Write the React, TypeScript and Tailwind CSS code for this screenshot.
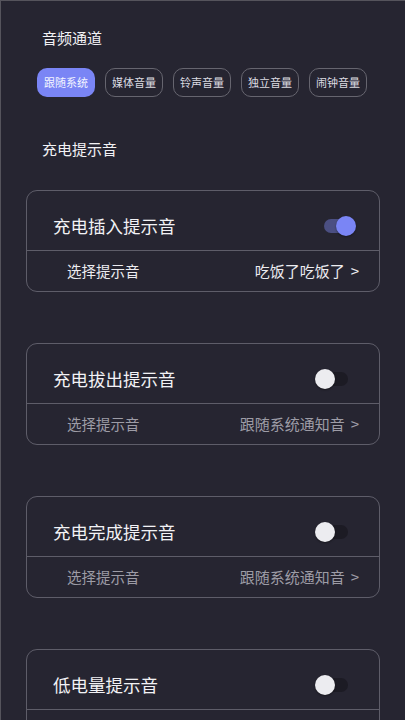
import React from "react";

const font = { fontFamily: '"Noto Sans CJK SC", "Noto Sans", sans-serif' };

function Toggle({ on }: { on: boolean }) {
  return (
    <div
      className={`relative w-[24px] h-[14px] rounded-full ${
        on ? "bg-[#4b4f82]" : "bg-[#1c1b24]"
      }`}
    >
      <div
        className={`absolute top-[-3px] w-[20px] h-[20px] rounded-full shadow-[0_1px_2px_rgba(0,0,0,0.4)] ${
          on ? "right-[-8px] bg-[#7a85f5]" : "left-[-9px] bg-[#ececf0]"
        }`}
      />
    </div>
  );
}

function Card({
  title,
  on,
  value,
}: {
  title: string;
  on: boolean;
  value: string;
}) {
  const sub = on ? "text-[#ececf0]" : "text-[#9d9ca6]";
  return (
    <div className="rounded-[11px] border border-[#5e5d69] overflow-hidden">
      <div className="h-[59px] pt-[10px] flex items-center justify-between pl-[26px] pr-[31px]">
        <span className="text-[17.5px] leading-[24px] text-[#f2f2f5]">{title}</span>
        <Toggle on={on} />
      </div>
      <div className="h-px bg-[#5e5d69]" />
      <div className="h-[40px] flex items-center justify-between pl-[40px] pr-[20px]">
        <span className={`text-[14.5px] ${sub}`}>选择提示音</span>
        <span className={`text-[15px] ${sub}`}>
          {value}
          <span className="ml-[6px]">&gt;</span>
        </span>
      </div>
    </div>
  );
}

export default function App() {
  const chips = ["跟随系统", "媒体音量", "铃声音量", "独立音量", "闹钟音量"];
  return (
    <div
      className="min-h-[720px] h-[720px] overflow-hidden bg-[#262531] border-l border-t border-[#55545c]"
      style={font}
    >
      <div className="pl-[41px] pt-[27px] text-[15px] leading-[20px] text-[#f2f2f5]">
        音频通道
      </div>
      <div className="flex gap-[10px] pl-[36px] mt-[20px]">
        {chips.map((c, i) => (
          <div
            key={c}
            className={`w-[58px] h-[29px] rounded-[10px] flex items-center justify-center text-[11px] ${
              i === 0
                ? "bg-[#7a85f5] text-[#f4f5ff]"
                : "border border-[#66656f] text-[#dcdce2]"
            }`}
          >
            {c}
          </div>
        ))}
      </div>
      <div className="pl-[41px] mt-[41px] text-[15px] leading-[22px] text-[#f2f2f5]">
        充电提示音
      </div>
      <div className="px-[25px] mt-[30px] flex flex-col gap-[51px]">
        <Card title="充电插入提示音" on={true} value="吃饭了吃饭了" />
        <Card title="充电拔出提示音" on={false} value="跟随系统通知音" />
        <Card title="充电完成提示音" on={false} value="跟随系统通知音" />
        <Card title="低电量提示音" on={false} value="跟随系统通知音" />
      </div>
    </div>
  );
}
